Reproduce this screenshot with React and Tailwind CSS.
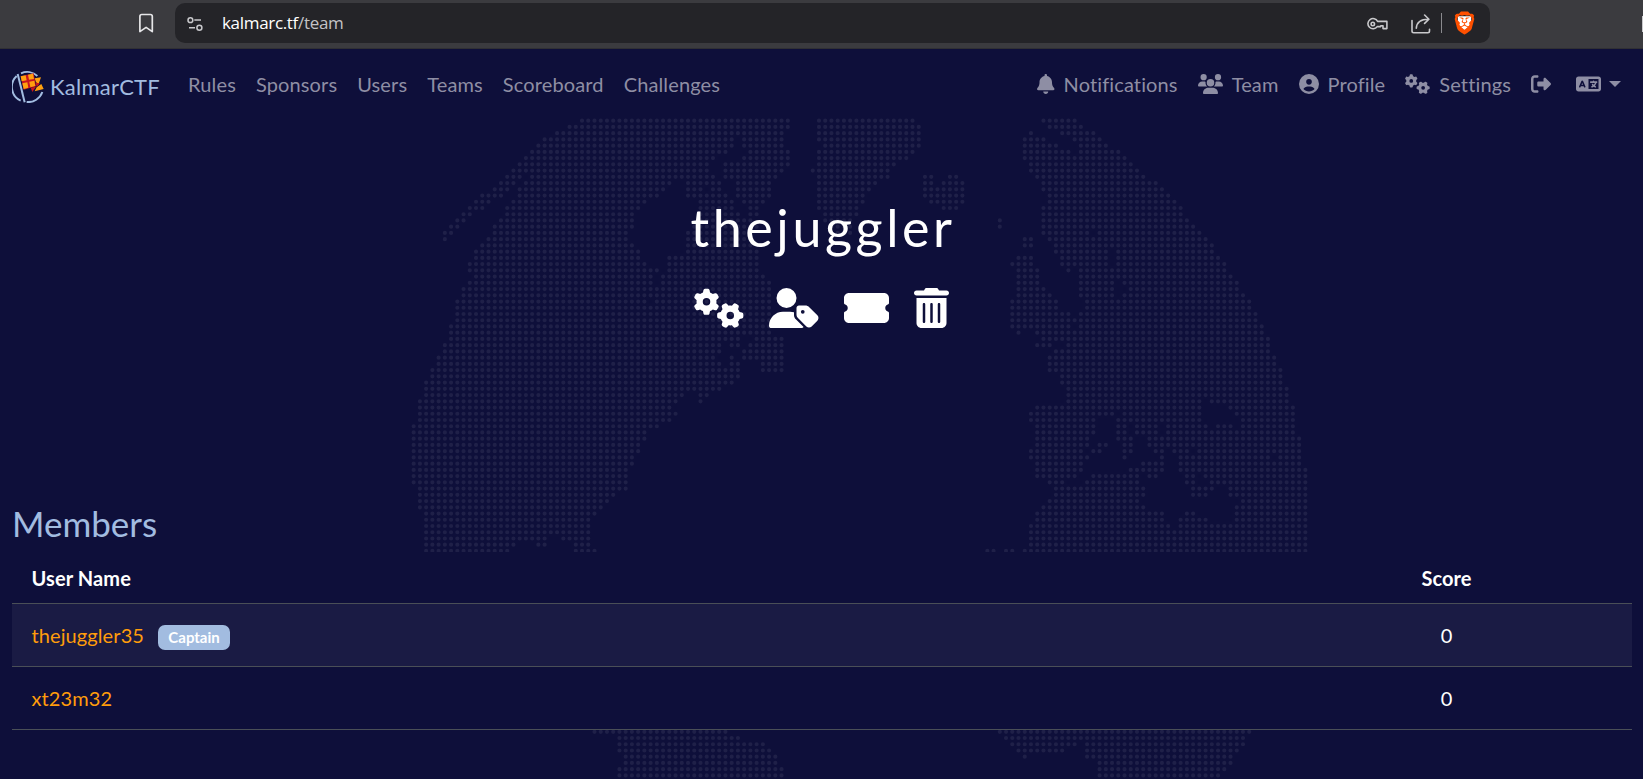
import React from "react";
import {
  FaBell,
  FaUsers,
  FaCircleUser,
  FaGears,
  FaRightFromBracket,
  FaLanguage,
  FaUserTag,
  FaTicketSimple,
  FaTrashCan,
} from "react-icons/fa6";
import { SiBrave } from "react-icons/si";

// Land cells of the dotted globe: one line per grid row, "start-end" column runs.
const UPPER = `27-60 65-80 101-106
25-60 65-81 102-107
23-59 65-81 99 104-109
21-51 53-59 65-81 98-101 106-110
20-51 53-59 66-81 98-103 107-111
19-50 54-60 65-80 98-105 107-113
18-48 53-60 65-79 98-114
17-47 50-60 65-77 99-115
16-47 50-59 64-76 99-116
15-17 19-48 50-58 65-76 82-83 86-87 100-117
14-16 18-41 44-49 52-57 65-74 82-83 85-88 101-119
13-15 17-40 44-46 48-49 52-57 65-73 82-88 101-120
11-14 17-39 44-50 52-57 65-72 82-88 102-121
10-12 16-37 46-51 53-56 65-72 83-88 102-122
9-11 15-36 46-51 54-55 65-71 85-87 101-123
8-9 15-35 46-52 54-55 66-71 101-123
7-8 14-35 46-54 66-70 94 101-124
6-7 13-35 45-55 67-70 94 101-125
5-6 13-34 44-54 68-70 101-108 110-126
5 12-34 44-54 98-99 102-127
11-35 44-54 98-99 103-128
10-36 44-55 103-111 113-128
10-36 41-55 97-99 104-111 113-129
9-37 41-55 96-99 104-111 113-130
9-39 41-55 97-100 105 107-130
10-38 40-56 97-100 107-131
9-38 40-57 97-100 107-112 114-132
8-57 97-101 107-112 115-132
8-57 97-102 107-112 114-133
7-37 39-57 96-103 108-134
7-57 96-103 108-134
7-57 96-105 107-135
7-57 96-135
6-57 96-105 107-136
6-57 97 100-136
6-52 55-59 101-137
5-49 51-52 54-59 100-102 105-137
5-49 53-59 103-137
4-48 51 53-59 102-138
4-49 51-52 56-59 102-138
3-52 56-59 102-139
3-52 104-139
2-51 104-139
2-49 105-140
2-43 46-47 105-140
1-42 46 105-126 128-140
1-41 100-126 131-141
1-42 99-112 114-126 132-141
1-41 99-109 113-126 133-141
0-39 100-109 113-114 116-119 121-127 129-131 133-141
0-37 100-109 113-114 116-119 121-141
0-37 100-108 113-115 118-142
0-36 100-108 110-111 114-115 118-142
0-36 99-107 109-110 114-115 119-120 122-124 126-142
0-35 99-108 114 120 123-137 139-142
0-35 100-107 117-120 123-142
0-34 100-107 115-120 123-143
0-34 100-106 109-116 118-119 124-125 127-143
0-34 102-104 108-116 124-125 128-143
1-34 103-117 125-128 131-143
1-32 103-117 125-127 131-143
1-31 102-116 133-143
1-30 101-117 132-143
2-29 100-120 124-125 132-143
2-28 100-120 123-127 132-143
2-28 99-121 123-143
2-28 99-143
2-21 24-28 99-143
2-16 20-21 26-28 99-143
2-15 26-29 92-93 95-96 98-143`;

const LOWER = `29-50 94-134
33-52 95-133
33-56 96-106 108-133
33-57 97-104 108-132
34-58 98 108-131
34-58 110-131
33-59 110-130
33-59 110-129`;

const PITCH = 6.2355;

function dotPath(rows, firstRow) {
  let d = "";
  rows.split("\n").forEach((line, i) => {
    const y = 71.7 + (firstRow + i) * PITCH;
    line.split(" ").forEach((run) => {
      const [a, b = a] = run.split("-").map(Number);
      for (let c = a; c <= b; c++) {
        d += `M${(413.67 + c * PITCH).toFixed(2)} ${y.toFixed(2)}h0`;
      }
    });
  });
  return d;
}

const DOTS = dotPath(UPPER, 0) + dotPath(LOWER, 98);

function Globe() {
  return (
    <svg
      className="absolute left-0 top-0 h-[730px] w-[1643px]"
      viewBox="0 0 1643 730"
      aria-hidden="true"
    >
      <path d={DOTS} stroke="#1f2048" strokeWidth="4.2" strokeLinecap="round" fill="none" />
    </svg>
  );
}

function BrowserBar() {
  return (
    <div className="flex h-[49px] items-start overflow-hidden border-b border-[#303034] bg-[#3b3b3f] pt-[3px] font-['Open_Sans','Noto_Sans',sans-serif]">
      <svg className="ml-[138px] mt-[10px] h-5 w-4 shrink-0" viewBox="0 0 16 20" fill="none" stroke="#e6e6e8" strokeWidth="1.7" strokeLinejoin="round">
        <path d="M1.9 3.4Q1.9 1.5 3.8 1.5H12.4Q14.3 1.5 14.3 3.4V18.6L8.1 14.4L1.9 18.6Z" />
      </svg>
      <div className="ml-[21px] flex h-10 w-[1315px] shrink-0 items-center rounded-[10px] bg-[#242428] pl-3">
        <svg className="mt-px h-4 w-4" viewBox="0 0 16 16" fill="none" stroke="#c9c9cc" strokeWidth="1.5">
          <circle cx="3.4" cy="4.2" r="2.4" />
          <circle cx="12.4" cy="11.8" r="2.5" />
          <path d="M7.3 4.1H14M2 11.8H8" />
        </svg>
        <div className="ml-[19px] pb-px text-[17px] leading-[38px] tracking-[-0.32px] text-[#c3c3c6]">
          <span className="text-white">kalmarc.tf</span>/team
        </div>
        <div className="ml-auto flex items-center pr-[14px]">
          <svg className="mt-px h-[14px] w-[21px]" viewBox="0 0 21 14" fill="none" stroke="#c9c9cc" strokeWidth="1.6" strokeLinejoin="round">
            <path d="M10.6 4.4H19.9V11.6H16V8.7H13.8V9.6H10.2A5.1 5.1 0 1 1 10.6 4.4Z" />
            <circle cx="5.8" cy="7" r="1.7" />
          </svg>
          <svg className="ml-[23px] mt-px h-[20px] w-[20px]" viewBox="0 0 20 20" fill="none" stroke="#c9c9cc" strokeWidth="1.6" strokeLinecap="round" strokeLinejoin="round">
            <path d="M1 6.5V17Q1 18.7 2.7 18.7H16.8Q18.5 18.7 18.5 17V15.2" />
            <path d="M5.3 14.2C5.6 9 8.5 5.2 17.6 5.2M13.6 1L17.9 5.2L13.6 9.4" />
          </svg>
          <div className="ml-[10px] h-5 w-px bg-[#8a8a8e]" />
          <div className="relative ml-[11px] h-6 w-[23px]">
            <svg className="absolute inset-0 h-6 w-[23px]" viewBox="0 0 24 24">
              <path d="M5 5H19V13L12 20.500L5 13Z" fill="#fff" />
            </svg>
            <SiBrave className="absolute inset-0 h-6 w-[23px] text-[#ff5000]" />
          </div>
        </div>
      </div>
      <div className="ml-auto mt-[13px] h-4 w-px bg-[#c9c9cc]" />
    </div>
  );
}

function Logo() {
  return (
    <div className="flex items-center text-[#a2bce0]">
      <svg className="mt-1 h-8 w-8" viewBox="36 213 96 96">
        <g fill="none" stroke="#a2bce0">
          <path d="M50 228A45 45 0 0 0 62 302" strokeWidth="6" />
          <path d="M63 220A45 45 0 0 1 112 228" strokeWidth="6" />
          <path d="M127 276A45 45 0 0 1 80 306" strokeWidth="6" />
          <path d="M53 222L74 307" strokeWidth="6" />
        </g>
        <path d="M62 229L101 220L108 259L71 269Z" fill="#c8141e" />
        <path d="M62 229L77 226L80 241L65 244ZM84 224L99 221L102 237L87 239ZM67 250L82 247L85 263L71 267ZM88 245L103 242L106 258L91 262Z" fill="#ffa00f" />
        <path d="M92 263L108 260L97 276Z" fill="#c8141e" />
        <path d="M104 235L123 232L116 252L108 247ZM110 262L124 252L131 267L104 274Z" fill="#ffa00f" />
        <path d="M107 248L120 250L110 261Z" fill="#c8141e" />
      </svg>
      <span className="ml-[6px] mt-[5px] text-[22px] leading-7 tracking-[0.25px]">KalmarCTF</span>
    </div>
  );
}

function NavItem({ children }) {
  return <a className="flex items-center whitespace-nowrap">{children}</a>;
}

function Navbar() {
  return (
    <nav className="relative flex h-[71px] items-center pl-3 pr-[22px] text-xl tracking-[0.13px] text-[#8e8ea4]">
      <Logo />
      <div className="mb-0.5 ml-[28px] flex gap-5">
        {["Rules", "Sponsors", "Users", "Teams", "Scoreboard", "Challenges"].map((label) => (
          <NavItem key={label}>{label}</NavItem>
        ))}
      </div>
      <div className="mb-0.5 ml-auto flex items-center gap-5">
        <NavItem>
          <FaBell className="mr-[9px] h-5 w-[17.5px]" />
          Notifications
        </NavItem>
        <NavItem>
          <FaUsers className="mr-[9px] h-5 w-[25px]" />
          Team
        </NavItem>
        <NavItem>
          <FaCircleUser className="mr-[9px] h-5 w-5" />
          Profile
        </NavItem>
        <NavItem>
          <FaGears className="mr-[9px] h-5 w-[25px]" />
          Settings
        </NavItem>
        <NavItem>
          <FaRightFromBracket className="mr-[5px] h-5 w-5" />
        </NavItem>
        <NavItem>
          <FaLanguage className="h-5 w-[25px]" />
          <svg className="ml-2 h-[6px] w-3" viewBox="0 0 12 6">
            <path d="M0 0H12L6 6Z" fill="currentColor" />
          </svg>
        </NavItem>
      </div>
    </nav>
  );
}

function MemberRow({ name, score, captain, striped }) {
  return (
    <div
      className={
        striped
          ? "flex h-[63px] items-center border-b border-[#4a4f57] bg-[#1a1b44]"
          : "flex h-[63px] items-center border-b border-[#4a4f57] bg-[#0e0f3a]"
      }
    >
      <div className="flex flex-1 items-center pl-[19.5px]">
        <span className="tracking-[0.1px] text-[#ff9d0b]">{name}</span>
        {captain && (
          <span className="ml-[14px] mt-[4px] flex h-[25px] w-[72px] items-center justify-center rounded-[7px] bg-[#a2bce0] text-[15px] font-bold text-white">
            Captain
          </span>
        )}
      </div>
      <div className="w-[371px] text-center text-white">{score}</div>
    </div>
  );
}

export default function App() {
  return (
    <div className="h-[779px] overflow-hidden bg-[#0e0f3a] font-['Lato',sans-serif]">
      <BrowserBar />
      <div className="relative h-[730px]">
        <Globe />
        <Navbar />
        <header className="relative flex h-[379px] flex-col items-center pt-[79px] text-white">
          <h1 className="pl-[3px] text-[52px] leading-[56px] tracking-[3.6px]">thejuggler</h1>
          <div className="mt-[33px] flex items-center gap-[25px]">
            <FaGears className="h-10 w-[50px]" />
            <FaUserTag className="h-10 w-[50px]" />
            <FaTicketSimple className="h-10 w-[45px]" />
            <FaTrashCan className="h-10 w-[35px]" />
          </div>
        </header>
        <main className="relative px-[11px] pl-3">
          <h3 className="h-[53px] pt-[2px] text-[35px] leading-[44px] text-[#a2bce0]">Members</h3>
          <div className="text-xl">
            <div className="flex h-[52px] items-center border-b border-[#4a4f57] bg-[#0e0f3a] font-bold tracking-[0.1px] text-white">
              <div className="flex-1 pl-[19.5px]">User Name</div>
              <div className="w-[371px] text-center">Score</div>
            </div>
            <MemberRow name="thejuggler35" score={0} captain striped />
            <MemberRow name="xt23m32" score={0} />
          </div>
        </main>
      </div>
    </div>
  );
}
